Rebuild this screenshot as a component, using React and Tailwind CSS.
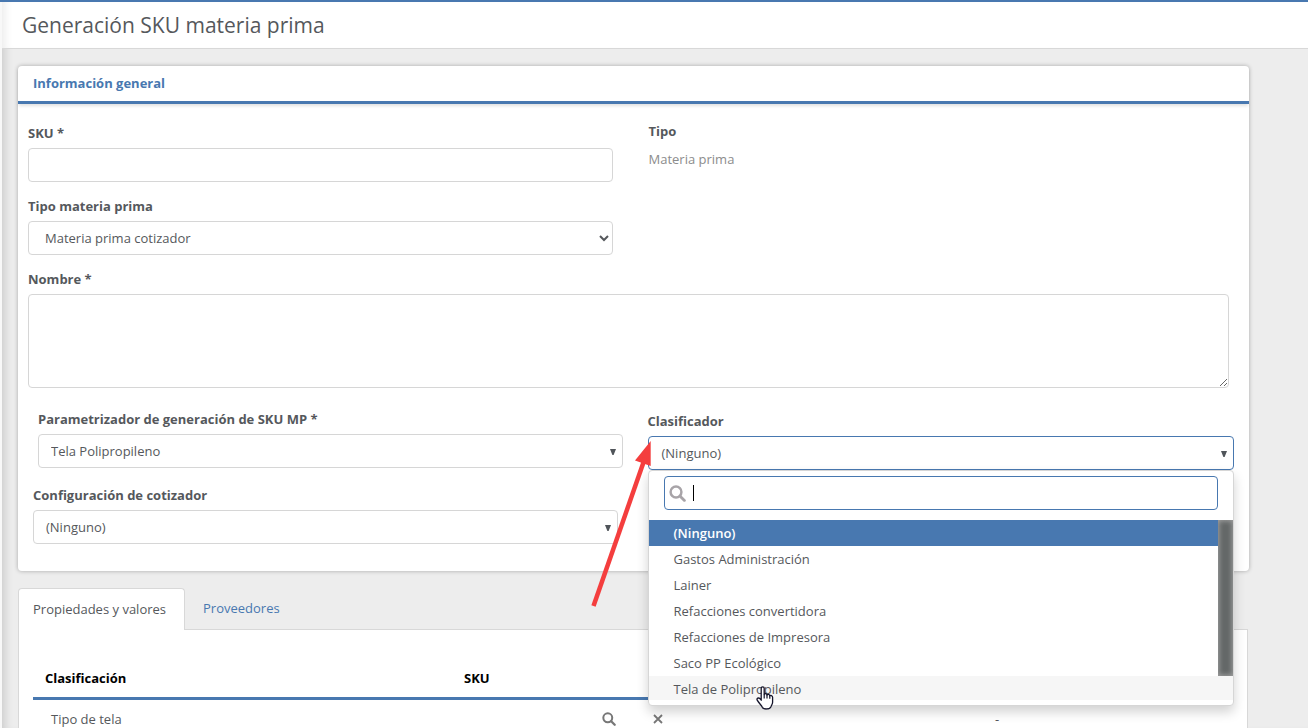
import React from "react";

const labelClass = "block mb-[5px] text-[13px] leading-5 font-bold text-[#55585c]";
const controlClass =
  "block w-full rounded border border-[#d6d6d6] bg-white text-[13px] text-[#55585c] outline-none";

function Field({ id, label, className = "", children }) {
  return (
    <div className={className}>
      <label htmlFor={id} className={labelClass}>
        {label}
      </label>
      {children}
    </div>
  );
}

function Caret() {
  return (
    <svg
      className="pointer-events-none absolute right-1.5 top-3.5 h-2 w-2"
      viewBox="0 0 8 8"
      aria-hidden="true"
    >
      <path d="M1 1h6L4.6 7H3.4z" fill="#50555a" />
    </svg>
  );
}

function SearchIcon({ className }) {
  return (
    <svg className={className} viewBox="0 0 16 16" fill="none" aria-hidden="true">
      <circle cx="6.6" cy="6.6" r="5.1" stroke="currentColor" strokeWidth="2.3" />
      <path d="M10.5 10.5l4 4" stroke="currentColor" strokeWidth="2.6" strokeLinecap="round" />
    </svg>
  );
}

function PlainSelect({ id, value }) {
  return (
    <div className="relative">
      <select id={id} className={`${controlClass} h-[34px] appearance-none px-3 pt-px`} defaultValue={value}>
        <option>{value}</option>
      </select>
      <Caret />
    </div>
  );
}

const options = [
  "Gastos Administración",
  "Lainer",
  "Refacciones convertidora",
  "Refacciones de Impresora",
  "Saco PP Ecológico",
];

function HandPointer() {
  return (
    <svg
      className="absolute left-[107px] top-[215px] h-6 w-[18px]"
      viewBox="0 0 18 24"
      aria-hidden="true"
    >
      <path
        d="M5.2 14.2V2.4C5.2 .3 8.2 .3 8.2 2.4V8.6C8.4 7.2 10.8 7.3 11 9C11.5 7.9 13.6 8.2 13.8 9.8C14.5 9 16.6 9.4 16.6 11.3V16.2C16.6 18.5 15.2 19.3 14.8 21C13.6 23.6 7.4 23.6 6.3 21.2C5.4 19 3.3 17.8 1.2 14.2C.4 12.3 2.5 11.2 4 12.7Z"
        fill="#fff"
        stroke="#14142a"
        strokeWidth="1.3"
        strokeLinejoin="round"
      />
      <path d="M8.2 8.6v4M11 9v3.6M13.8 9.8v3" stroke="#14142a" strokeWidth="1.2" />
    </svg>
  );
}

function ClassifierMenu() {
  return (
    <div className="absolute inset-x-0 top-[34px] z-10 rounded border border-[#d6d6d6] bg-white pb-[5px] shadow-[0_6px_12px_rgba(0,0,0,0.18)]">
      <div className="relative px-[15px] pt-[5px]">
        <input
          type="text"
          aria-label="Buscar clasificador"
          className="block h-[34px] w-full rounded border border-[#4878b0] bg-white pl-8 text-[13px] outline-none"
        />
        <SearchIcon className="absolute left-5 top-3.5 h-[17px] w-[17px] text-[#a8a4a8]" />
        <span className="absolute left-11 top-3.5 h-4 w-px bg-black" />
      </div>
      <div className="relative mt-2.5 h-[180px] overflow-hidden text-[13px] leading-[26px] text-[#55585c]">
        <ul role="listbox" aria-label="Clasificador">
          <li role="option" aria-selected="true" className="bg-[#4878b0] px-[25px] font-semibold text-white">
            (Ninguno)
          </li>
          {options.map((o) => (
            <li key={o} role="option" aria-selected="false" className="px-[25px]">
              {o}
            </li>
          ))}
          <li role="option" aria-selected="false" className="bg-[#f6f6f6] px-[25px]">
            Tela de Polipropileno
          </li>
        </ul>
        <div className="absolute right-0 top-0 h-[156px] w-[15px] bg-[#646868] shadow-[inset_0_0_5px_1px_#a0a0a0]" />
      </div>
      <HandPointer />
    </div>
  );
}

function AnnotationArrow() {
  return (
    <svg
      className="pointer-events-none absolute -left-[60px] top-0 z-20 h-[172px] w-[64px]"
      viewBox="0 0 64 172"
      aria-hidden="true"
    >
      <path d="M62.7 5L47 24.5L62.7 30Z" fill="#f43e3e" />
      <path d="M5.5 170L57 22" stroke="#f43e3e" strokeWidth="4.5" />
    </svg>
  );
}

export default function App() {
  return (
    <div className="flex h-screen flex-col overflow-hidden border-t-2 border-[#4878b0] bg-[#ededed] font-['Open_Sans',sans-serif] text-[13px] text-[#55585c]">
      <div className="flex min-h-0 flex-1">
        <div className="w-0.5 shrink-0 bg-[#f8f8f8]" />
        <div className="min-w-0 flex-1 shadow-[inset_9px_0_9px_-6px_rgba(0,0,0,0.14)]">
          <header className="border-b border-[#d8d8d8] bg-white pl-5 shadow-[inset_9px_0_9px_-6px_rgba(0,0,0,0.08)]">
            <h1 className="text-[21px] leading-[46px]">Generación SKU materia prima</h1>
          </header>
          <main className="ml-4 mr-[59px] mt-[17px]">
            <section className="rounded bg-white shadow-[0_0_4px_rgba(0,0,0,0.3)]">
              <h2 className="border-b-[3px] border-[#4878b0] px-[15px] text-[13px] font-bold leading-[35px] text-[#4878b0] shadow-[0_3px_3px_-1px_rgba(0,0,0,0.12)]">
                Información general
              </h2>
              <form className="pb-[27px]">
                <div className="grid grid-cols-2 pt-[19px]">
                  <div className="flex flex-col gap-3.5 pl-2.5 pr-[21px]">
                    <Field id="sku" label="SKU *">
                      <input id="sku" type="text" className={`${controlClass} h-[34px] px-3`} />
                    </Field>
                    <Field id="tipo-mp" label="Tipo materia prima">
                      <select id="tipo-mp" className={`${controlClass} h-[34px] px-3`}>
                        <option>Materia prima cotizador</option>
                      </select>
                    </Field>
                  </div>
                  <dl className="-mt-0.5 px-[15px] leading-5">
                    <dt className="mb-2 font-bold">Tipo</dt>
                    <dd className="text-[#8c8c8c]">Materia prima</dd>
                  </dl>
                </div>
                <Field id="nombre" label="Nombre *" className="mt-3.5 pl-2.5 pr-5">
                  <textarea id="nombre" className={`${controlClass} h-[94px] px-3 py-1.5`} />
                </Field>
                <div className="mt-[21px] grid grid-cols-2">
                  <div className="flex flex-col gap-[17px]">
                    <Field id="param" label="Parametrizador de generación de SKU MP *" className="pl-5 pr-[11px]">
                      <PlainSelect id="param" value="Tela Polipropileno" />
                    </Field>
                    <Field id="config" label="Configuración de cotizador" className="pl-[15px] pr-4">
                      <PlainSelect id="config" value="(Ninguno)" />
                    </Field>
                  </div>
                  <Field id="clasificador" label="Clasificador" className="pl-3.5 pr-[15px] pt-0.5">
                    <div className="relative">
                      <button
                        id="clasificador"
                        type="button"
                        aria-haspopup="listbox"
                        aria-expanded="true"
                        className="block h-[34px] w-full rounded border border-[#4878b0] bg-white px-[13px] pt-0.5 text-left text-[13px] text-[#55585c]"
                      >
                        (Ninguno)
                      </button>
                      <Caret />
                      <ClassifierMenu />
                      <AnnotationArrow />
                    </div>
                  </Field>
                </div>
              </form>
            </section>
            <section className="mr-px mt-[17px]">
              <div role="tablist" className="flex">
                <button
                  role="tab"
                  type="button"
                  aria-selected="true"
                  className="relative -mb-px h-[42px] rounded-t border border-b-0 border-[#d8d8d8] bg-white pl-3.5 pr-[18px]"
                >
                  Propiedades y valores
                </button>
                <button role="tab" type="button" aria-selected="false" className="h-[42px] -mb-px px-[18px] text-[#4878b0]">
                  Proveedores
                </button>
              </div>
              <div className="border border-[#d8d8d8] bg-white px-3.5 pb-5 pt-7">
                <table className="w-full table-fixed text-left leading-5">
                  <thead className="border-b-[3px] border-[#4878b0] text-black">
                    <tr>
                      <th className="w-[35%] px-3 pb-[9px] pt-2.5">Clasificación</th>
                      <th className="w-[35%] px-[11px] pb-[9px] pt-2.5">SKU</th>
                      <th className="w-[21%]" />
                      <th />
                    </tr>
                  </thead>
                  <tbody>
                    <tr>
                      <td className="px-[18px] py-[9px]">Tipo de tela</td>
                      <td>
                        <div className="flex items-center gap-9 pl-[149px] text-[#777]">
                          <button type="button" aria-label="Buscar SKU">
                            <SearchIcon className="block h-3.5 w-3.5" />
                          </button>
                          <button type="button" aria-label="Quitar SKU">
                            <svg className="block h-3 w-3" viewBox="0 0 12 12" aria-hidden="true">
                              <path d="M2 2l8 8M10 2l-8 8" stroke="currentColor" strokeWidth="1.8" />
                            </svg>
                          </button>
                        </div>
                      </td>
                      <td className="pr-1 text-center">-</td>
                      <td />
                    </tr>
                  </tbody>
                </table>
              </div>
            </section>
          </main>
        </div>
      </div>
    </div>
  );
}
